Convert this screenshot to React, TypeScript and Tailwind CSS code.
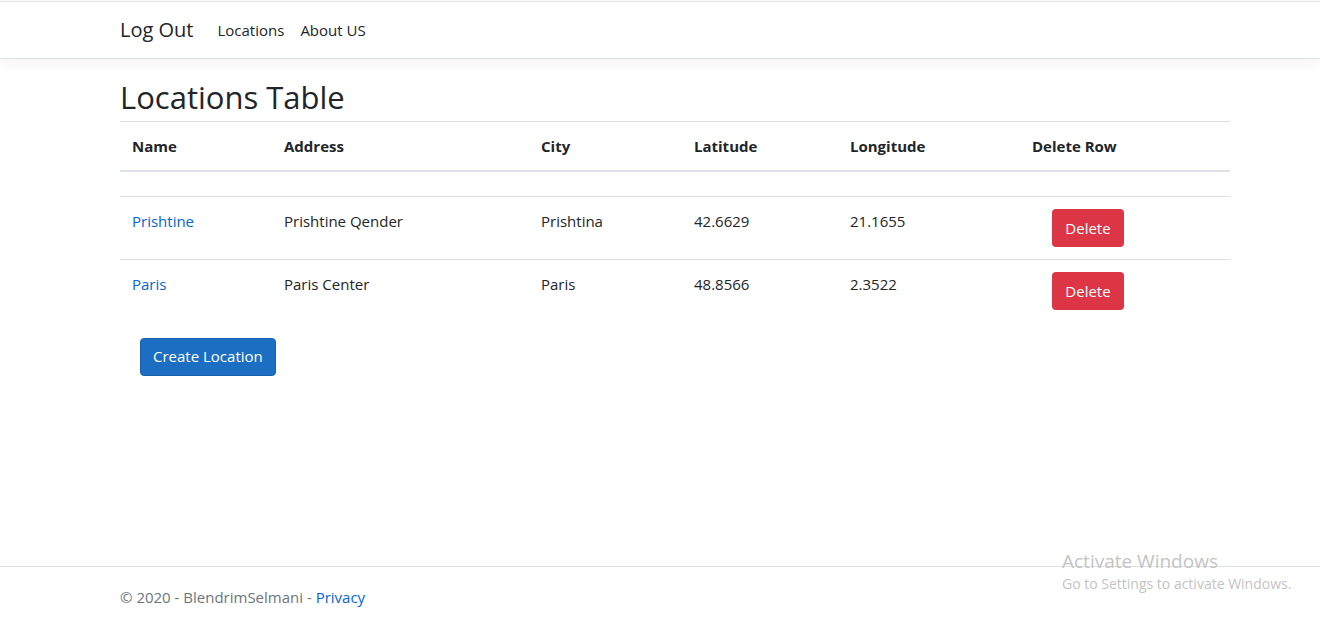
import React from 'react';

interface Location {
  name: string;
  address: string;
  city: string;
  latitude: string;
  longitude: string;
}

const locations: Location[] = [
  { name: 'Prishtine', address: 'Prishtine Qender', city: 'Prishtina', latitude: '42.6629', longitude: '21.1655' },
  { name: 'Paris', address: 'Paris Center', city: 'Paris', latitude: '48.8566', longitude: '2.3522' },
];

const font = { fontFamily: '"Segoe UI", "Open Sans", "Noto Sans", sans-serif' };

export default function App() {
  return (
    <div className="min-h-[622px] flex flex-col bg-white text-[#212529] relative" style={font}>
      {/* navbar */}
      <header className="mt-px border-t border-b border-[#dee2e6] shadow-[0_4px_12px_rgba(0,0,0,0.05)] bg-white">
        <nav className="w-[1110px] ml-[120px] h-[56px] flex items-center">
          <a className="text-[20px] mr-6 text-[#212529]">Log Out</a>
          <a className="text-[15px] text-[#212529] mr-4">Locations</a>
          <a className="text-[15px] text-[#212529]">About US</a>
        </nav>
      </header>

      <main className="w-[1110px] ml-[120px] flex-1 pt-[20px]">
        <h1 className="text-[31px] font-medium leading-[1.2] mb-[5px]">Locations Table</h1>
        <table className="w-full text-[15px] border-collapse">
          <thead>
            <tr className="border-t border-[#dee2e6]">
              <th className="w-[152px] text-left font-bold px-3 pt-[13px] pb-3 border-b-2 border-[#dee2e6]">Name</th>
              <th className="w-[257px] text-left font-bold px-3 pt-[13px] pb-3 border-b-2 border-[#dee2e6]">Address</th>
              <th className="w-[153px] text-left font-bold px-3 pt-[13px] pb-3 border-b-2 border-[#dee2e6]">City</th>
              <th className="w-[156px] text-left font-bold px-3 pt-[13px] pb-3 border-b-2 border-[#dee2e6]">Latitude</th>
              <th className="w-[182px] text-left font-bold px-3 pt-[13px] pb-3 border-b-2 border-[#dee2e6]">Longitude</th>
              <th className="w-[210px] text-left font-bold px-3 pt-[13px] pb-3 border-b-2 border-[#dee2e6]">Delete Row</th>
            </tr>
          </thead>
          <tbody>
            <tr className="h-[26px] border-b border-[#dee2e6]">
              <td colSpan={6}></td>
            </tr>
            {locations.map((loc) => (
              <tr key={loc.name} className="border-b border-[#dee2e6] last:border-b-0 h-[63px] align-top">
                <td className="px-3 pt-[13px]">
                  <a className="text-[#0366d6]">{loc.name}</a>
                </td>
                <td className="px-3 pt-[13px]">{loc.address}</td>
                <td className="px-3 pt-[13px]">{loc.city}</td>
                <td className="px-3 pt-[13px]">{loc.latitude}</td>
                <td className="px-3 pt-[13px]">{loc.longitude}</td>
                <td className="pl-8 pt-3">
                  <button className="h-[38px] w-[72px] rounded bg-[#dc3545] text-white text-[15px]">Delete</button>
                </td>
              </tr>
            ))}
          </tbody>
        </table>
        <div className="pl-5 pt-[15px]">
          <button className="h-[38px] px-3 rounded bg-[#1b6ec2] border border-[#1861ac] text-white text-[15px]">
            Create Location
          </button>
        </div>
      </main>

      <footer className="border-t border-[#dee2e6] h-[56px]">
        <div className="w-[1110px] ml-[120px] pt-[19px] text-[15px] text-[#6c757d]">
          © 2020 - BlendrimSelmani - <a className="text-[#0366d6]">Privacy</a>
        </div>
      </footer>

      <div className="absolute left-[1062px] top-[548px] text-[#c4c4c4] pointer-events-none">
        <div className="text-[19px] leading-[26px]">Activate Windows</div>
        <div className="text-[14px] leading-[20px]">Go to Settings to activate Windows.</div>
      </div>
    </div>
  );
}
